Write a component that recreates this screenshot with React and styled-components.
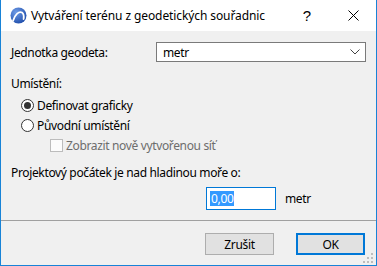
import React from "react";
import styled, { createGlobalStyle } from "styled-components";

const Global = createGlobalStyle`
  html, body { margin: 0; padding: 0; background: #ffffff; }
  body { font-family: "Noto Sans", "Liberation Sans", sans-serif; font-size: 12px; color: #000; }
  * { box-sizing: border-box; }
`;

const Window = styled.div`
  width: 377px;
  height: 266px;
  display: flex;
  flex-direction: column;
  border: 1px solid #1883d7;
  border-top: none;
  background: #f0f0f0;
  position: relative;
`;

const TitleBar = styled.div`
  height: 31px;
  background: #ffffff;
  display: flex;
  align-items: center;
  padding-left: 9px;
`;

const TitleText = styled.div`
  margin-left: 4px;
  font-size: 12px;
  color: #000;
  flex: 1;
  letter-spacing: -0.1px;
`;

const TitleButton = styled.div`
  width: ${(p) => p.$w}px;
  height: 31px;
  display: flex;
  align-items: center;
  justify-content: center;
  font-size: 15px;
  font-family: "Liberation Sans", sans-serif;
  color: #000;
`;

const Body = styled.div`
  flex: 1;
  display: flex;
  flex-direction: column;
  padding: 11px 9px 0 10px;
  letter-spacing: -0.35px;
`;

const FieldRow = styled.div`
  display: flex;
  align-items: center;
  height: 20px;
`;

const Label = styled.div`
  width: 145px;
`;

const Select = styled.div`
  width: 210px;
  height: 20px;
  border: 1px solid #7a7a7a;
  background: #fff;
  display: flex;
  align-items: center;
  padding-left: 6px;
  padding-right: 5px;
  justify-content: space-between;
`;

const SectionLabel = styled.div`
  margin-top: ${(p) => p.$mt || 0}px;
  height: 16px;
  line-height: 16px;
`;

const OptionRow = styled.div`
  height: 20px;
  display: flex;
  align-items: center;
  padding-left: ${(p) => p.$indent}px;
  margin-top: ${(p) => p.$mt || 0}px;
  color: ${(p) => (p.$disabled ? "#6d6d6d" : "#000")};
`;

const Radio = styled.span`
  width: 13px;
  height: 13px;
  border-radius: 50%;
  border: 1px solid #333;
  background: #fff;
  margin-right: 3px;
  display: flex;
  align-items: center;
  justify-content: center;
  &::after {
    content: "";
    width: 7px;
    height: 7px;
    border-radius: 50%;
    background: ${(p) => (p.$checked ? "#333" : "transparent")};
  }
`;

const Check = styled.span`
  width: 13px;
  height: 13px;
  border: 1px solid #bcbcbc;
  background: #fcfcfc;
  margin-right: 3px;
`;

const InputRow = styled.div`
  margin-top: 6px;
  display: flex;
  align-items: center;
  padding-left: 195px;
  height: 23px;
`;

const Input = styled.div`
  width: 70px;
  height: 23px;
  border: 1px solid #0078d7;
  background: #fff;
  display: flex;
  align-items: center;
  padding-left: 3px;
`;

const Selected = styled.span`
  background: #3399ff;
  color: #fff;
  line-height: 15px;
  padding: 0 1px;
`;

const Unit = styled.span`
  margin-left: 9px;
`;

const Separator = styled.div`
  margin: 10px -9px 0 -10px;
  height: 1px;
  background: #a0a0a0;
`;

const ButtonRow = styled.div`
  margin-top: 12px;
  display: flex;
  justify-content: flex-end;
  gap: 22px;
  padding-right: 2px;
`;

const Button = styled.div`
  width: 69px;
  height: 22px;
  background: #e1e1e1;
  border: ${(p) => (p.$primary ? "2px solid #0078d7" : "1px solid #adadad")};
  display: flex;
  align-items: center;
  justify-content: center;
  font-size: 12px;
`;

const Grip = styled.svg`
  position: absolute;
  right: 3px;
  bottom: 2px;
`;

const Logo = () => (
  <svg width="17" height="17" viewBox="0 0 17 17">
    <defs>
      <radialGradient id="lg" cx="0.35" cy="0.3" r="0.8">
        <stop offset="0" stopColor="#6f9be6" />
        <stop offset="1" stopColor="#1b4aa8" />
      </radialGradient>
    </defs>
    <circle cx="8.5" cy="8.5" r="8" fill="url(#lg)" />
    <path d="M3 14 C5 7 9 4 12 5.5 C13.5 6.5 14 9 13.6 12" fill="none" stroke="#fff" strokeWidth="1.8" strokeLinecap="round" />
  </svg>
);

const Chevron = () => (
  <svg width="10" height="6" viewBox="0 0 10 6">
    <path d="M0.5 0.5 L5 5 L9.5 0.5" fill="none" stroke="#444" strokeWidth="1" />
  </svg>
);

export default function App() {
  return (
    <>
      <Global />
      <Window>
        <TitleBar>
          <Logo />
          <TitleText>Vytváření terénu z geodetických souřadnic</TitleText>
          <TitleButton $w={46}>?</TitleButton>
          <TitleButton $w={46}>
            <svg width="11" height="11" viewBox="0 0 11 11">
              <path d="M0.5 0.5 L10.5 10.5 M10.5 0.5 L0.5 10.5" stroke="#000" strokeWidth="1" />
            </svg>
          </TitleButton>
        </TitleBar>
        <Body>
          <FieldRow>
            <Label>Jednotka geodeta:</Label>
            <Select>
              <span>metr</span>
              <Chevron />
            </Select>
          </FieldRow>
          <SectionLabel $mt={14}>Umístění:</SectionLabel>
          <OptionRow $indent={10} $mt={3}>
            <Radio $checked />
            Definovat graficky
          </OptionRow>
          <OptionRow $indent={10}>
            <Radio />
            Původní umístění
          </OptionRow>
          <OptionRow $indent={39} $disabled>
            <Check />
            Zobrazit nově vytvořenou síť
          </OptionRow>
          <SectionLabel $mt={10}>Projektový počátek je nad hladinou moře o:</SectionLabel>
          <InputRow>
            <Input>
              <Selected>0,00</Selected>
            </Input>
            <Unit>metr</Unit>
          </InputRow>
          <Separator />
          <ButtonRow>
            <Button>Zrušit</Button>
            <Button $primary>OK</Button>
          </ButtonRow>
        </Body>
        <Grip width="10" height="10" viewBox="0 0 10 10">
          {[[8, 0], [8, 4], [8, 8], [4, 4], [4, 8], [0, 8]].map(([x, y], i) => (
            <rect key={i} x={x} y={y} width="2" height="2" fill="#bdbdbd" />
          ))}
        </Grip>
      </Window>
    </>
  );
}
